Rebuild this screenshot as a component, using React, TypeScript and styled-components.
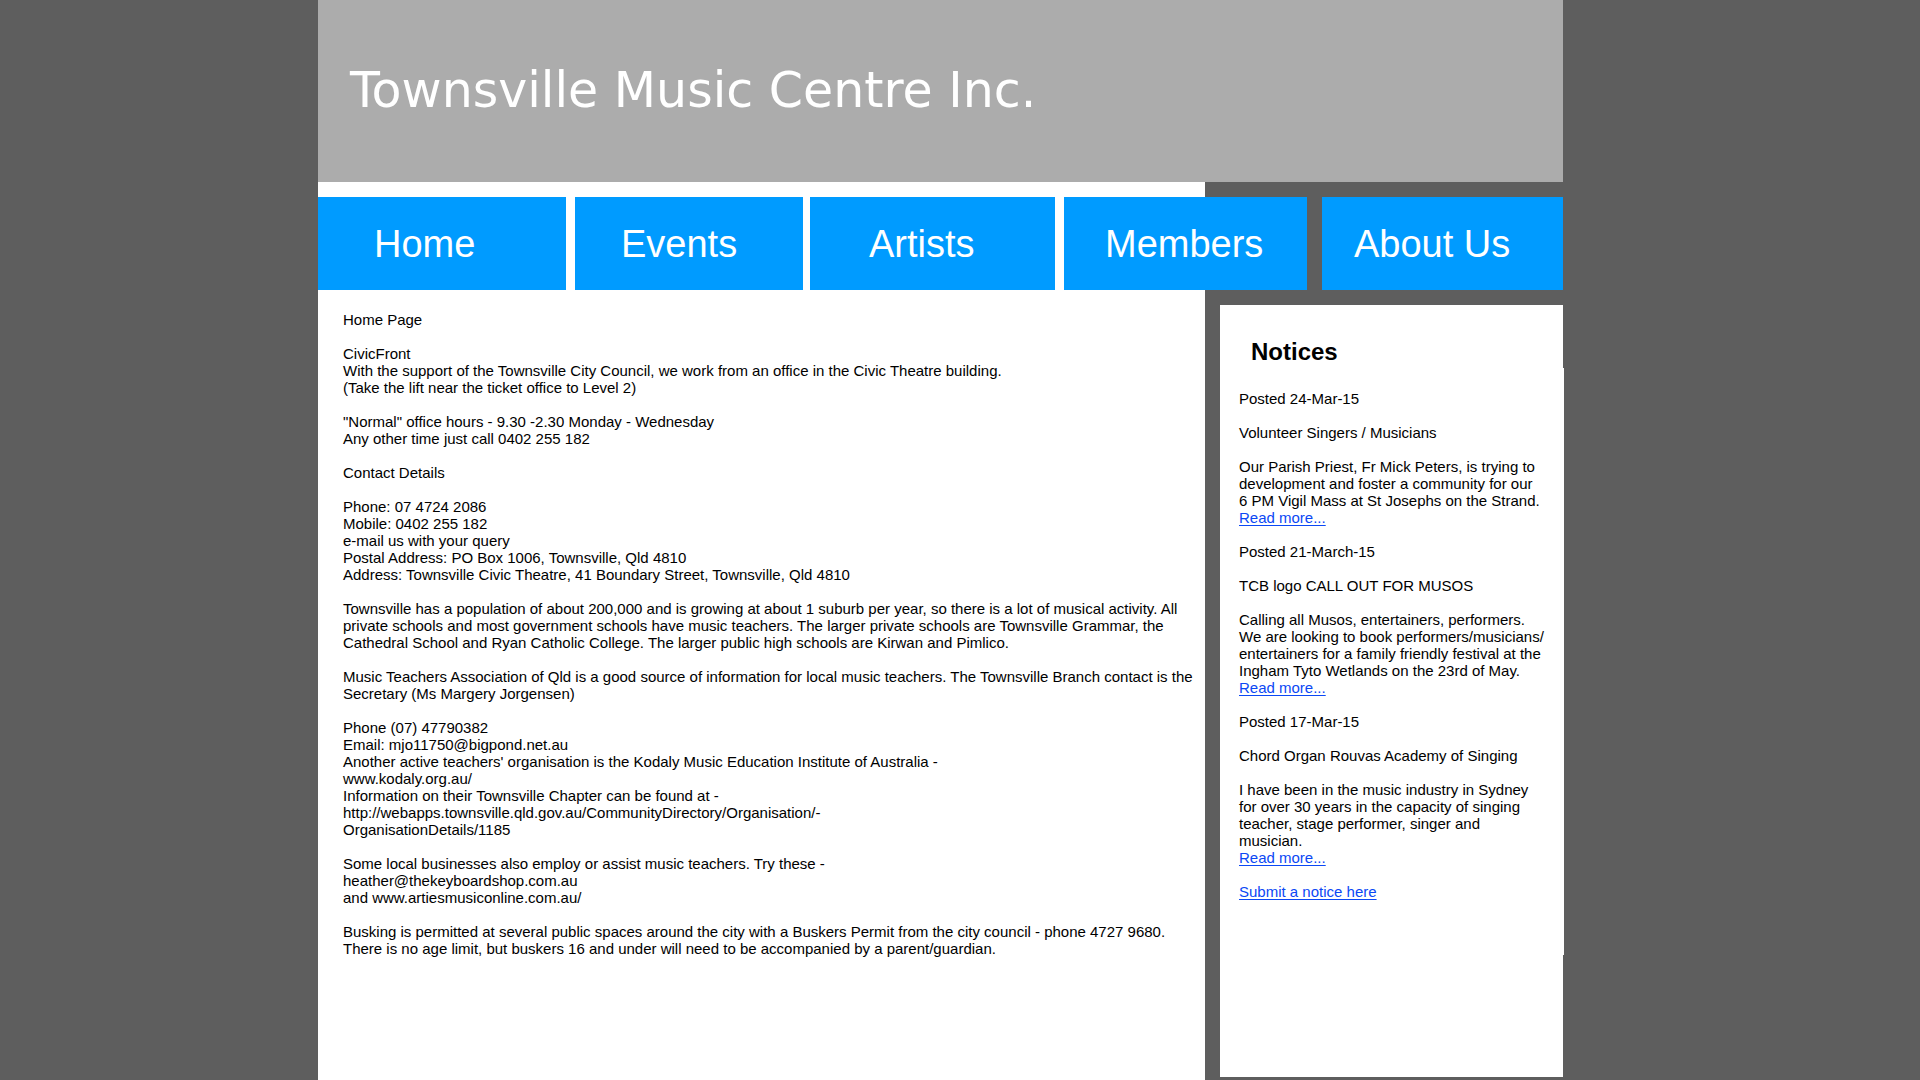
import React from "react";
import styled, { createGlobalStyle } from "styled-components";

const GlobalStyle = createGlobalStyle`
  * { box-sizing: border-box; }
  body {
    margin: 0;
    background: #5e5e5e;
    color: #000;
    font-family: "Liberation Sans", Arial, sans-serif;
    font-size: 15px;
    line-height: 17px;
  }
`;

const Page = styled.div`
  display: grid;
  grid-template-columns: 318fr 1245fr 357fr;
  min-height: 100vh;
`;

const Site = styled.div`
  grid-column: 2;
  min-width: 0;
  display: grid;
  grid-template-columns: minmax(0, 887fr) minmax(0, 358fr);
  grid-template-rows: auto auto 1fr;

  /* White sheet running behind the navigation and the main text */
  &::before {
    content: "";
    grid-column: 1;
    grid-row: 2 / 4;
    background: #fff;
  }
`;

const Banner = styled.header`
  grid-column: 1 / -1;
  grid-row: 1;
  display: flex;
  align-items: center;
  min-height: 182px;
  padding: 0 32px;
  background: #acacac;
`;

const SiteTitle = styled.h1`
  margin: 0;
  color: #fff;
  font: 400 49px/56px Verdana, "DejaVu Sans", sans-serif;
`;

const Nav = styled.nav`
  grid-column: 1 / -1;
  grid-row: 2;
  display: grid;
  grid-template-columns: 248fr 237fr 252fr 252fr 256fr;
  padding-top: 15px;
`;

const Tab = styled.a<{ $gap: number; $inset: number }>`
  min-width: 0;
  display: flex;
  align-items: center;
  height: 93px;
  margin-left: ${(p) => p.$gap}px;
  padding-left: ${(p) => p.$inset}px;
  background: #009bff;
  color: #fff;
  font-size: 38px;
  line-height: 44px;
  white-space: nowrap;
  text-decoration: none;
`;

const Main = styled.main`
  grid-column: 1;
  grid-row: 3;
  padding: 21px 8px 24px 25px;
`;

const Sidebar = styled.aside`
  grid-column: 2;
  grid-row: 3;
  margin: 15px 0 3px 15px;
  background: #fff;
`;

const NoticesTitle = styled.h2`
  margin: 0;
  padding: 33px 31px 2px;
  font-size: 24px;
  line-height: 28px;
`;

const NoticeList = styled.div`
  margin-right: -1px;
  padding: 22px 8px 55px 19px;
  background: #fff;
`;

const Text = styled.p`
  margin: 0 0 17px;
`;

const TextLink = styled.a`
  color: #0b48f5;
  text-decoration: underline 1px;
  text-underline-offset: 2px;
`;

const tabs = [
  { label: "Home", gap: 0, inset: 56 },
  { label: "Events", gap: 9, inset: 46 },
  { label: "Artists", gap: 7, inset: 59 },
  { label: "Members", gap: 9, inset: 41 },
  { label: "About Us", gap: 15, inset: 32 },
];

const paragraphs: string[][] = [
  ["Home Page"],
  [
    "CivicFront",
    "With the support of the Townsville City Council, we work from an office in the Civic Theatre building.",
    "(Take the lift near the ticket office to Level 2)",
  ],
  [
    '"Normal" office hours - 9.30 -2.30 Monday - Wednesday',
    "Any other time just call 0402 255 182",
  ],
  ["Contact Details"],
  [
    "Phone: 07 4724 2086",
    "Mobile: 0402 255 182",
    "e-mail us with your query",
    "Postal Address: PO Box 1006, Townsville, Qld 4810",
    "Address: Townsville Civic Theatre, 41 Boundary Street, Townsville, Qld 4810",
  ],
  [
    "Townsville has a population of about 200,000 and is growing at about 1 suburb per year, so there is a lot of musical activity. All",
    "private schools and most government schools have music teachers. The larger private schools are Townsville Grammar, the",
    "Cathedral School and Ryan Catholic College. The larger public high schools are Kirwan and Pimlico.",
  ],
  [
    "Music Teachers Association of Qld is a good source of information for local music teachers. The Townsville Branch contact is the",
    "Secretary (Ms Margery Jorgensen)",
  ],
  [
    "Phone (07) 47790382",
    "Email: mjo11750@bigpond.net.au",
    "Another active teachers' organisation is the Kodaly Music Education Institute of Australia -",
    "www.kodaly.org.au/",
    "Information on their Townsville Chapter can be found at -",
    "http://webapps.townsville.qld.gov.au/CommunityDirectory/Organisation/-",
    "OrganisationDetails/1185",
  ],
  [
    "Some local businesses also employ or assist music teachers. Try these -",
    "heather@thekeyboardshop.com.au",
    "and www.artiesmusiconline.com.au/",
  ],
  [
    "Busking is permitted at several public spaces around the city with a Buskers Permit from the city council - phone 4727 9680.",
    "There is no age limit, but buskers 16 and under will need to be accompanied by a parent/guardian.",
  ],
];

const notices = [
  {
    posted: "Posted 24-Mar-15",
    title: "Volunteer Singers / Musicians",
    lines: [
      "Our Parish Priest, Fr Mick Peters, is trying to",
      "development and foster a community for our",
      "6 PM Vigil Mass at St Josephs on the Strand.",
    ],
  },
  {
    posted: "Posted 21-March-15",
    title: "TCB logo CALL OUT FOR MUSOS",
    lines: [
      "Calling all Musos, entertainers, performers.",
      "We are looking to book performers/musicians/",
      "entertainers for a family friendly festival at the",
      "Ingham Tyto Wetlands on the 23rd of May.",
    ],
  },
  {
    posted: "Posted 17-Mar-15",
    title: "Chord Organ Rouvas Academy of Singing",
    lines: [
      "I have been in the music industry in Sydney",
      "for over 30 years in the capacity of singing",
      "teacher, stage performer, singer and",
      "musician.",
    ],
  },
];

function Lines({ lines }: { lines: string[] }) {
  return (
    <>
      {lines.map((line, i) => (
        <React.Fragment key={line}>
          {i > 0 && <br />}
          {line}
        </React.Fragment>
      ))}
    </>
  );
}

export default function App() {
  return (
    <Page>
      <GlobalStyle />
      <Site>
        <Banner>
          <SiteTitle>Townsville Music Centre Inc.</SiteTitle>
        </Banner>
        <Nav>
          {tabs.map((t) => (
            <Tab key={t.label} href="#" $gap={t.gap} $inset={t.inset}>
              {t.label}
            </Tab>
          ))}
        </Nav>
        <Main>
          {paragraphs.map((lines) => (
            <Text key={lines[0]}>
              <Lines lines={lines} />
            </Text>
          ))}
        </Main>
        <Sidebar>
          <NoticesTitle>Notices</NoticesTitle>
          <NoticeList>
            {notices.map((n) => (
              <article key={n.posted}>
                <Text>{n.posted}</Text>
                <Text>{n.title}</Text>
                <Text>
                  <Lines lines={n.lines} />
                  <br />
                  <TextLink href="#">Read more...</TextLink>
                </Text>
              </article>
            ))}
            <TextLink href="#">Submit a notice here</TextLink>
          </NoticeList>
        </Sidebar>
      </Site>
    </Page>
  );
}
